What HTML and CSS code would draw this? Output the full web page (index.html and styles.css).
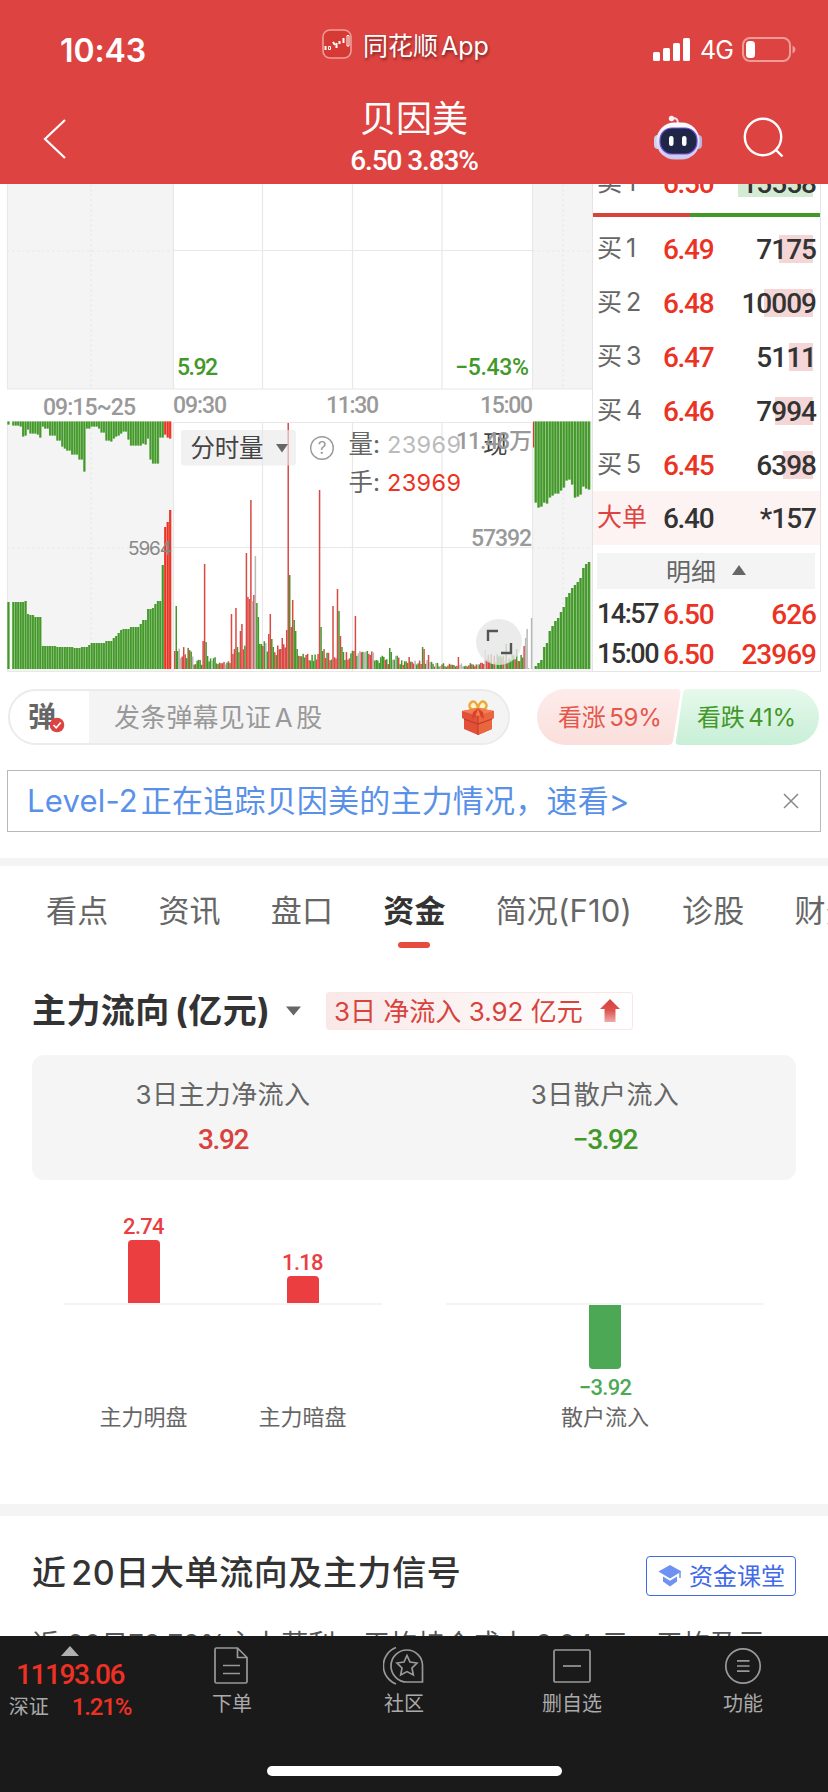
FILE: index.html
```html
<!DOCTYPE html>
<html lang="zh-CN">
<head>
  <meta charset="UTF-8">
  <meta name="viewport" content="width=device-width, initial-scale=1.0">
  <title>贝因美</title>
  <link rel="stylesheet" href="styles.css">
</head>
<body>
<div class="page">

  <header class="header">
    <div class="status">
      <div class="time">10:43</div>
      <div class="from-app">
        <svg width="30" height="30" viewBox="0 0 30 30">
          <rect x="1" y="1" width="28" height="28" rx="7" fill="#d63a34" stroke="#ee9c98" stroke-width="1.6"/>
          <path d="M3.500 17v4M11 13l2 3M14.500 14v5M17.500 12v3M21.500 9v5" stroke="#fff" stroke-width="2"/>
          <path d="M6.500 17.500h2v3h-2zM25 6.500h2v10.500h-2z" fill="none" stroke="#fff"/>
        </svg>
        <span>同花顺 App</span>
      </div>
      <div class="signal">
        <svg width="38" height="24" viewBox="0 0 38 24" fill="#fff">
          <rect x="0" y="14" width="7" height="9" rx="1.500"/>
          <rect x="10" y="10" width="7" height="13" rx="1.500"/>
          <rect x="20" y="5" width="7" height="18" rx="1.500"/>
          <rect x="30" y="0" width="7" height="23" rx="1.500"/>
        </svg>
        <span>4G</span>
        <svg width="54" height="26" viewBox="0 0 54 26">
          <rect x="1" y="1" width="47" height="23" rx="7" fill="none" stroke="#ee9c98" stroke-width="2"/>
          <rect x="4" y="4" width="9" height="17" rx="3.500" fill="#fff"/>
          <path d="M50.500 8.500q3 1.500 3 4t-3 4z" fill="#ee9c98"/>
        </svg>
      </div>
    </div>
    <div class="nav">
      <svg class="back" width="24" height="40" viewBox="0 0 24 40"><path d="M22 1L2 20L22 39" fill="none" stroke="#fff" stroke-width="2.200"/></svg>
      <div class="title">
        <h1>贝因美</h1>
        <div class="din">6.50 3.83%</div>
      </div>
      <div class="tools">
        <svg width="50" height="46" viewBox="0 0 50 46">
          <defs>
            <linearGradient id="shell" x1="0" y1="0" x2="0" y2="1"><stop offset="0" stop-color="#fff"/><stop offset="1" stop-color="#c9c8f0"/></linearGradient>
          </defs>
          <path d="M19 3.500q6-1.500 6 5" fill="none" stroke="#e9e6f7" stroke-width="2"/>
          <circle cx="18.500" cy="3.500" r="2.700" fill="#f3f0fa"/>
          <rect x="1" y="20" width="8" height="14" rx="4" fill="#cfd0ea"/>
          <rect x="41" y="20" width="8" height="14" rx="4" fill="#b9b6e2"/>
          <rect x="3.500" y="7.500" width="43" height="37" rx="18" fill="url(#shell)"/>
          <rect x="7" y="13" width="37" height="26" rx="12" fill="#202746" stroke="#6b52d8" stroke-width="1.200"/>
          <rect x="16" y="21" width="4.500" height="10" rx="2.200" fill="#fff"/>
          <rect x="29" y="21" width="4.500" height="10" rx="2.200" fill="#fff"/>
        </svg>
        <svg width="42" height="42" viewBox="0 0 42 42" fill="none" stroke="#fff" stroke-width="2.400">
          <circle cx="20" cy="20" r="18.200"/><path d="M32.500 32.500L39.500 39.500"/>
        </svg>
      </div>
    </div>
  </header>

  <section class="quote">
    <svg class="chart" width="592" height="488" viewBox="0 184 592 488">
      <rect x="7" y="184" width="166" height="205" fill="#f4f4f4"/>
      <rect x="532" y="184" width="60" height="205" fill="#f4f4f4"/>
      <rect x="7" y="422" width="166" height="250" fill="#f4f4f4"/>
      <rect x="532" y="422" width="60" height="250" fill="#f4f4f4"/>
      <g stroke="#e8e8e8" stroke-width="1.200" fill="none">
        <path d="M7.500 184V389M173.500 184V389M262.500 184V389M352.500 184V389M442 184V389M532.500 184V389"/>
        <path d="M173 250.500H532M7 389H592M173 422.500H592M173 547.500H532M7 671.500H592"/>
        <path d="M7.500 422V672M173.500 422V672M262.500 422V672M352.500 422V672M442 422V672M532.500 422V672"/>
        <path d="M7 251H173M532 251H592M91 184V389M563 184V389M7 548H173M532 548H592M91 422V672M563 422V672" stroke-dasharray="2.500 2.500"/>
      </g>
      <g id="bars"></g>

      <text class="t-din green" x="177" y="375" textLength="41">5.92</text>
      <text class="t-din green" x="455" y="375" textLength="74">−5.43%</text>
      <text class="t-din grey" x="43" y="414.500" textLength="93">09:15~25</text>
      <text class="t-din grey" x="173" y="413" textLength="54">09:30</text>
      <text class="t-din grey" x="326" y="413" textLength="53">11:30</text>
      <text class="t-din grey" x="480" y="413" textLength="53">15:00</text>
      <text class="t-small" x="128" y="554.500" textLength="44">5964</text>

      <rect x="181" y="430" width="115" height="35.500" rx="3" fill="#e9e9e9" fill-opacity=".65"/>
      <text class="t-cn" x="190.500" y="457" textLength="73">分时量</text>
      <path d="M276 444h12l-6 8.500z" fill="#666"/>
      <circle cx="322" cy="448" r="11.300" fill="none" stroke="#999" stroke-width="1.400"/>
      <text class="t-q" x="322" y="454" text-anchor="middle">?</text>
      <text class="t-cn dim" x="348.500" y="453">量:</text>
      <text class="t-num pale" x="387" y="452.500" textLength="74">23969</text>
      <text class="t-cn" x="483" y="453">现</text>
      <text class="t-din grey" x="456" y="448.500" textLength="76">11.48万</text>
      <text class="t-cn dim" x="348.500" y="491">手:</text>
      <text class="t-num red" x="387" y="490.500" textLength="74">23969</text>
      <text class="t-din grey" x="471" y="545.500" textLength="61">57392</text>

      <circle cx="499" cy="642" r="23" fill="#e6e6e6" fill-opacity=".8"/>
      <path d="M488 641V631H498M511 643V653H501" fill="none" stroke="#555" stroke-width="2.400"/>
    </svg>

    <div class="orders">
      <div class="order cut"><span>卖 1</span><b>6.50</b><i><em class="sell" style="width:75px"></em>15558</i></div>
      <div class="ratio"><span></span></div>
      <div class="order"><span>买 1</span><b>6.49</b><i><em style="width:34px"></em>7175</i></div>
      <div class="order"><span>买 2</span><b>6.48</b><i><em style="width:49px"></em>10009</i></div>
      <div class="order"><span>买 3</span><b>6.47</b><i><em style="width:24px"></em>5111</i></div>
      <div class="order"><span>买 4</span><b>6.46</b><i><em style="width:38px"></em>7994</i></div>
      <div class="order"><span>买 5</span><b>6.45</b><i><em style="width:30px"></em>6398</i></div>
      <div class="order big"><span>大单</span><b>6.40</b><i>*157</i></div>
      <div class="detail">明细 <svg width="14" height="10"><path d="M0 10L7 0L14 10z" fill="#666"/></svg></div>
      <div class="deal"><span>14:57</span><b>6.50</b><i>626</i></div>
      <div class="deal"><span>15:00</span><b>6.50</b><i>23969</i></div>
    </div>
  </section>

  <section class="danmu">
    <div class="danmu-input">
      <div class="danmu-switch">弹
        <svg width="16" height="16" viewBox="0 0 16 16"><circle cx="8" cy="8" r="7.300" fill="#dd4340"/><path d="M4.500 8l2.700 2.800L11.800 5.500" fill="none" stroke="#fff" stroke-width="1.700"/></svg>
      </div>
      <span class="danmu-text">发条弹幕见证 A 股</span>
      <svg class="gift" width="34" height="36" viewBox="0 0 34 36">
        <path d="M17 9C10 13 6 7 10 3.500C13 1 16 4 17 9C18 4 21 1 24 3.500C28 7 24 13 17 9z" fill="#fff3c8" stroke="#e9a93c" stroke-width="2.400"/>
        <path d="M1 12L17 9L33 12V19L31 20V30L17 36L3 30V20L1 19z" fill="#e2503a"/>
        <path d="M1 12L17 17L33 12L17 9z" fill="#f47b52"/>
        <path d="M17 17L33 12V19L31 20V30L17 36z" fill="#e9663f"/>
        <path d="M3 20L17 25L31 20" fill="none" stroke="#c23a2a" stroke-width="1.200"/>
        <path d="M17 17V36" stroke="#c93f2c" stroke-width="1.200"/>
        <path d="M17 9.500L12 13l-1 7 3-2 3-8 3 8 3 2-1-7z" fill="#d5432c"/>
      </svg>
    </div>
    <div class="vote">
      <svg width="284" height="56" viewBox="0 0 284 56">
        <defs>
          <linearGradient id="up" x1="0" y1="0" x2="0" y2="1"><stop offset="0" stop-color="#fdeceb"/><stop offset="1" stop-color="#fadfdc"/></linearGradient>
          <linearGradient id="down" x1="0" y1="0" x2="0" y2="1"><stop offset="0" stop-color="#e6f9ec"/><stop offset="1" stop-color="#c8efd6"/></linearGradient>
        </defs>
        <path d="M28 0H139Q144 0 143.500 4L136 52Q135 56 131 56H28A28 28 0 0 1 28 0z" fill="url(#up)"/>
        <path d="M151 0H254A28 28 0 0 1 254 56H143Q138 56 139 52L146 4Q147 0 151 0z" fill="url(#down)"/>
      </svg>
      <span class="vote-up">看涨 59%</span>
      <span class="vote-down">看跌 41%</span>
    </div>
  </section>

  <section class="notice">
    <span>Level-2 正在追踪贝因美的主力情况，速看&gt;</span>
    <svg width="16" height="16" viewBox="0 0 16 16"><path d="M1 1L15 15M15 1L1 15" stroke="#888" stroke-width="1.500"/></svg>
  </section>

  <nav class="tabs">
    <a>看点</a><a>资讯</a><a>盘口</a><a class="active">资金</a><a>简况(F10)</a><a>诊股</a><a>财务</a>
  </nav>

  <section class="flow">
    <div class="flow-head">
      <h2>主力流向 (亿元)</h2>
      <svg width="15" height="10"><path d="M0 .500H15L7.500 9.500z" fill="#666"/></svg>
      <div class="badge"><span>3日 净流入 3.92 亿元</span>
        <svg width="20" height="24" viewBox="0 0 20 24">
          <defs><linearGradient id="arr" x1="0" y1="0" x2="0" y2="1"><stop offset="0" stop-color="#d8403c"/><stop offset=".5" stop-color="#dc5350"/><stop offset="1" stop-color="#eeaaa8"/></linearGradient></defs>
          <path d="M10 0L20 10H15.500V23H4.500V10H0z" fill="url(#arr)"/>
        </svg>
      </div>
    </div>
    <div class="summary">
      <div><p>3日主力净流入</p><strong class="din up">3.92</strong></div>
      <div><p>3日散户流入</p><strong class="din down">−3.92</strong></div>
    </div>
    <div class="columns">
      <div class="group">
        <div class="col">
          <div class="above"><span>2.74</span><div class="bar" style="height:63px"></div></div>
          <div class="below"></div>
          <p>主力明盘</p>
        </div>
        <div class="col">
          <div class="above"><span>1.18</span><div class="bar" style="height:27px"></div></div>
          <div class="below"></div>
          <p>主力暗盘</p>
        </div>
      </div>
      <div class="group">
        <div class="col">
          <div class="above"></div>
          <div class="below"><div class="bar" style="height:64px"></div><span>−3.92</span></div>
          <p>散户流入</p>
        </div>
      </div>
    </div>
  </section>

  <section class="signal-card">
    <div class="signal-head">
      <h2>近 20日大单流向及主力信号</h2>
      <div class="course">
        <svg width="24" height="22" viewBox="0 0 24 22" fill="#6f92f2">
          <path d="M12 0L23.500 6.500L12 13.500L0.500 6.500z"/><path d="M5 11.500L12 15.800L19 11.500V16.500Q15.500 19 12 21.500Q8.500 19 5 16.500z"/><path d="M22 7v6" stroke="#6f92f2" stroke-width="1.500"/>
        </svg>
        <span>资金课堂</span>
      </div>
    </div>
    <p class="signal-text">近 20日73.73%主力获利，平均持仓成本 6.04 元，平均盈亏</p>
  </section>

  <footer class="bottom">
    <div class="index">
      <svg width="18" height="10"><path d="M0 10L9 0L18 10z" fill="#b0b0b0"/></svg>
      <div class="din index-value">11193.06</div>
      <div class="index-row"><span>深证</span><b class="din">1.21%</b></div>
    </div>
    <div class="menu">
      <div class="item">
        <svg width="36" height="40" viewBox="0 0 36 40"><path d="M2.500 2H23.500L33 11.500V35.500Q33 37 31.500 37H2.500Q1 37 1 35.500V3.500Q1 2 2.500 2zM23.500 2V11.500H33M9 19.500H26M9 27.500H26"/></svg>
        <span>下单</span>
      </div>
      <div class="item">
        <svg width="42" height="40" viewBox="0 0 42 40"><path d="M24 4A16 16 0 1 0 24 36H39.500V19.500A15.500 15.500 0 0 0 24 4zM13 1.500A19.500 19.500 0 0 0 13 38"/><path d="M24 9.500L27 16L34 17L29 22L30.300 29L24 25.600L17.700 29L19 22L14 17L21 16z"/></svg>
        <span>社区</span>
      </div>
      <div class="item">
        <svg width="40" height="40" viewBox="0 0 40 40"><rect x="2" y="4" width="36" height="32" rx="1.500"/><path d="M11 20H29"/></svg>
        <span>删自选</span>
      </div>
      <div class="item">
        <svg width="40" height="40" viewBox="0 0 40 40"><circle cx="20" cy="20" r="17.200"/><path d="M14 14.800H26.500M14 20H26.500M14 25.200H26.500"/></svg>
        <span>功能</span>
      </div>
    </div>
    <div class="home"></div>
  </footer>

</div>
<script src="script.js"></script>
</body>
</html>
```

FILE: styles.css
```css
* {
  box-sizing: border-box;
}
body {
  margin: 0;
  background: #fff;
  color: #333;
  font-family: Inter, "Noto Sans CJK SC", sans-serif;
}
h1, h2, p {
  margin: 0;
}
b, i, em {
  font-style: normal;
}
svg {
  display: block;
  flex: none;
}
.page {
  width: 828px;
  height: 1792px;
  overflow: hidden;
  display: flex;
  flex-direction: column;
}
.page > * {
  flex: none;
}
.din {
  font-family: Roboto, sans-serif;
  font-weight: 500;
  letter-spacing: -0.05em;
}

/* header */
.header {
  height: 184px;
  background: #dd4340;
  color: #fff;
}
.status {
  height: 92px;
  display: grid;
  grid-template-columns: 300px 1fr 300px;
  padding-top: 8px;
}
.time {
  padding-left: 60px;
  align-self: center;
  font-size: 32px;
  font-weight: 600;
  letter-spacing: -0.1px;
}
.from-app {
  display: flex;
  align-items: center;
  gap: 11px;
  padding-left: 22px;
  height: 72px;
  font-size: 25px;
  white-space: nowrap;
  word-spacing: -4px;
  text-shadow: 1px 2px 3px rgba(0,0,0,0.45);
}
.signal {
  display: flex;
  align-items: center;
  font-size: 25px;
  padding-left: 125px;
  gap: 9px;
}
.signal span {
  letter-spacing: -1px;
}
.nav {
  height: 92px;
  display: grid;
  grid-template-columns: 300px 228px 300px;
}
.back {
  margin: 27px 0 0 43px;
}
.title {
  text-align: center;
}
.title h1 {
  font-size: 36px;
  line-height: 54px;
  font-weight: 400;
}
.title .din {
  font-size: 28px;
  line-height: 30px;
  letter-spacing: -1.1px;
}
.tools {
  display: flex;
  align-items: center;
  gap: 40px;
  padding: 0 0 0 125px;
}

/* chart and order book */
.quote {
  height: 488px;
  display: grid;
  grid-template-columns: 592px 229px;
  overflow: hidden;
}
.t-din {
  font: 500 23px Roboto, "Noto Sans CJK SC", sans-serif;
}
.t-small {
  font: 19px Inter, sans-serif;
  fill: #888;
}
.t-cn {
  font: 24.500px Inter, "Noto Sans CJK SC", sans-serif;
  fill: #444;
}
.t-q {
  font: 17px Inter, sans-serif;
  fill: #999;
}
.t-num {
  font: 23.500px Inter, sans-serif;
}
.dim { fill: #666; }
.green { fill: #43982a; }
.grey { fill: #999; }
.pale { fill: #bbb; }
.red { fill: #ea3323; }
.orders {
  border: solid #e4e4e4;
  border-width: 0 1px 1px;
  height: 488px;
}
.order, .deal {
  height: 54px;
  display: grid;
  grid-template-columns: 66px 66px 1fr;
  align-items: center;
  padding: 0 4px;
  font-size: 25px;
  color: #666;
  white-space: nowrap;
}
.order span {
  line-height: 36px;
  margin-top: -3px;
  word-spacing: -3px;
}
.order b, .deal b {
  font: 500 28px Roboto, sans-serif;
  letter-spacing: -1.3px;
  color: #ea3323;
}
.order i, .deal i {
  font: 500 28px Roboto, sans-serif;
  letter-spacing: -1px;
  color: #333;
  text-align: right;
}
/* depth bar drawn behind the volume */
.order i {
  position: relative;
  z-index: 0;
}
.order i em {
  position: absolute;
  z-index: -1;
  right: 3px;
  top: 2px;
  height: 28px;
  background: #f5d6d7;
}
.order i em.sell {
  background: #d2ebd2;
}
.order.cut {
  margin-top: -28px;
}
.ratio {
  height: 4px;
  margin: 3px 0 5px;
  background: #43982a;
}
.ratio span {
  display: block;
  width: 97px;
  height: 4px;
  background: #d8433d;
}
.order.big {
  height: 54px;
  margin-top: -1px;
  background: #fdf3f3;
  color: #dd4340;
}
.order.big b {
  color: #333;
}
.detail {
  height: 36px;
  margin: 8px 5px 5px 4px;
  padding-bottom: 2px;
  background: #f4f4f4;
  display: flex;
  align-items: center;
  justify-content: center;
  gap: 16px;
  font-size: 25px;
  color: #666;
}
.deal {
  height: 40px;
}
.deal span {
  font: 500 27px Roboto, sans-serif;
  letter-spacing: -1.5px;
  color: #333;
}
.deal i {
  color: #ea3323;
}

/* bullet comments */
.danmu {
  height: 98px;
  padding: 17px 8px 0;
  display: flex;
  justify-content: space-between;
}
.danmu-input {
  width: 502px;
  height: 56px;
  border: 2px solid #ebebeb;
  border-radius: 28px;
  background: #f4f4f4;
  display: flex;
  align-items: center;
  overflow: hidden;
}
.danmu-switch {
  width: 79px;
  height: 52px;
  background: #fff;
  display: flex;
  align-items: center;
  padding: 0 0 4px 18px;
  font-size: 28px;
  font-weight: 700;
  color: #666;
}
.danmu-switch svg {
  margin: 20px 0 0 -7px;
}
.danmu-text {
  flex: 1;
  padding: 0 0 4px 25px;
  font-size: 26px;
  letter-spacing: 0.2px;
  color: #999;
  word-spacing: -4px;
}
.gift {
  margin-right: 13px;
}
.vote {
  display: grid;
  grid-template-columns: 142px 142px;
  width: 284px;
  height: 56px;
  align-items: center;
  font-size: 24px;
  letter-spacing: -0.2px;
  word-spacing: -3px;
  margin-right: -1px;
}
.vote svg {
  grid-area: 1 / 1 / 2 / 3;
}
.vote span {
  margin-top: -3px;
}
.vote-up {
  grid-area: 1 / 1;
  padding-left: 21px;
  color: #e4574b;
}
.vote-down {
  grid-area: 1 / 2;
  padding-left: 18px;
  color: #43982a;
}

.notice {
  height: 62px;
  margin: 0 7px 26px;
  border: 1px solid #b8b8b8;
  display: flex;
  align-items: center;
  justify-content: space-between;
  padding: 0 21px 0 19px;
  font-size: 31px;
  letter-spacing: 0.2px;
  word-spacing: -6px;
  color: #5a91e8;
  white-space: nowrap;
}
.notice span {
  margin-top: -6px;
}

/* tabs */
.tabs {
  height: 110px;
  border-top: 8px solid #f4f4f4;
  padding: 22px 0 0 46px;
  display: flex;
  gap: 50px;
  font-size: 31px;
  letter-spacing: 0.2px;
  line-height: 46px;
  color: #666;
  white-space: nowrap;
}
.tabs a.active {
  color: #333;
  font-weight: 700;
}
.tabs a.active::after {
  content: "";
  display: block;
  width: 32px;
  height: 6px;
  border-radius: 3px;
  margin: 8px auto 0;
  background: #e64b3e;
}

/* money flow */
.flow {
  height: 536px;
  padding: 18px 32px 0;
}
.flow-head {
  height: 50px;
  display: flex;
  align-items: center;
}
.flow-head h2 {
  width: 254px;
  margin-top: -6px;
  font-size: 34px;
  font-weight: 700;
  letter-spacing: 0.4px;
  word-spacing: -3px;
  white-space: nowrap;
}
.badge {
  width: 307px;
  height: 38px;
  margin-left: 25px;
  padding: 0 12px 0 7px;
  border: 1px solid #fbe6e6;
  border-radius: 3px;
  background: linear-gradient(90deg, #f9e8e8, #fff);
  display: flex;
  align-items: center;
  justify-content: space-between;
  font-size: 26px;
  color: #d8433d;
  white-space: nowrap;
}
.badge span {
  margin-top: -4px;
}
.summary {
  height: 125px;
  margin-top: 19px;
  border-radius: 12px;
  background: #f5f5f5;
  display: grid;
  grid-template-columns: 1fr 1fr;
  text-align: center;
  padding-top: 20px;
}
.summary p {
  font-size: 26px;
  line-height: 40px;
  letter-spacing: 0.4px;
  color: #666;
}
.summary strong {
  display: block;
  font-size: 28px;
  line-height: 50px;
}
.up { color: #d8433d; }
.down { color: #43982a; }
.columns {
  display: grid;
  grid-template-columns: 318px 318px;
  gap: 64px;
  margin: 25px 32px 0;
}
.group {
  display: grid;
  grid-auto-flow: column;
  grid-auto-columns: 1fr;
}
.col {
  display: flex;
  flex-direction: column;
  align-items: center;
}
.above, .below {
  width: 100%;
  height: 100px;
  display: flex;
  flex-direction: column;
  align-items: center;
}
.above {
  justify-content: flex-end;
  border-bottom: 2px solid #f4f4f4;
}
.col span {
  font: 500 22px Roboto, sans-serif;
  letter-spacing: -0.7px;
  line-height: 26px;
  color: #ea3e41;
}
.below span {
  color: #4ca855;
  margin-top: 6px;
}
.bar {
  width: 32px;
  background: #ea3e41;
  border-radius: 4px 4px 0 0;
}
.below .bar {
  background: #4ca855;
  border-radius: 0 0 4px 4px;
}
.col p {
  margin-top: -3px;
  font-size: 22px;
  line-height: 30px;
  color: #666;
}

/* signal card */
.signal-card {
  height: 132px;
  border-top: 12px solid #f4f4f4;
  padding: 36px 32px 0;
  overflow: hidden;
}
.signal-head {
  display: flex;
  align-items: center;
  justify-content: space-between;
  height: 48px;
}
.signal-head h2 {
  margin-top: -11px;
  font-size: 34px;
  font-weight: 500;
  letter-spacing: 0.6px;
  word-spacing: -5px;
}
.course {
  width: 150px;
  height: 40px;
  border: 1.500px solid #3f6ae0;
  border-radius: 4px;
  display: flex;
  align-items: center;
  gap: 7px;
  padding-left: 11px;
  font-size: 24px;
  color: #4169e8;
}
.course span {
  margin-top: -4px;
}
.signal-text {
  margin-top: 25px;
  font-size: 27px;
  letter-spacing: 0.3px;
  line-height: 40px;
  color: #555;
  white-space: nowrap;
}

/* bottom bar */
.bottom {
  height: 156px;
  background: #1a1a1a;
  color: #aaa;
  display: grid;
  grid-template: 120px 36px / 140px 688px;
}
.index {
  display: flex;
  flex-direction: column;
  align-items: center;
  padding-top: 10px;
}
.index-value {
  font-size: 28px;
  line-height: 38px;
  color: #ef3124;
}
.index-row {
  display: flex;
  gap: 23px;
  font-size: 20px;
  line-height: 27px;
}
.index-row b {
  font-size: 24px;
  color: #ef3124;
}
.menu {
  display: grid;
  grid-template-columns: 184px 160px 176px 166px;
}
.item {
  display: flex;
  flex-direction: column;
  align-items: center;
  padding-top: 10px;
  font-size: 20px;
  line-height: 36px;
}
.item svg {
  fill: none;
  stroke: #999;
  stroke-width: 1.700;
}
.home {
  grid-column: 1 / 3;
  width: 295px;
  height: 10px;
  margin: 10px auto 0;
  border-radius: 5px;
  background: #fff;
}
```

FILE: script.js
```javascript
const svgNS = "http://www.w3.org/2000/svg";
const layer = document.getElementById("bars");
const GREEN = "#43982a", RED = "#ea3323", DAY_RED = "#d94a44", GREY = "#b8b8b8";

function bar(x, y, w, h, color) {
  const r = document.createElementNS(svgNS, "rect");
  r.setAttribute("x", x);
  r.setAttribute("y", y);
  r.setAttribute("width", w);
  r.setAttribute("height", h);
  r.setAttribute("fill", color);
  layer.appendChild(r);
}

// pale body with a darker core, like the call auction bars
function auction(x0, step, data, top, redFrom) {
  data.forEach((h, i) => {
    if (!h) return;
    const x = x0 + i * step;
    const red = i >= redFrom;
    const y = top ? 421.5 : 669 - h;
    bar(x, y, step, h, red ? "#f0766c" : "#86bd75");
    bar(x + step * 0.1, y, step * 0.68, h, red ? RED : GREEN);
  });
}

const preTop = [3,0,4,4,4,5,15,14,8,12,12,12,13,16,5,7,7,14,14,14,19,19,25,27,29,29,33,33,33,38,38,50,7,7,5,5,5,7,11,11,19,19,20,17,15,14,12,10,10,18,24,24,24,24,24,22,23,17,38,42,42,42,16,16,13,16,17];
const preBottom = [67,0,67,67,67,67,67,68,55,54,54,52,52,52,23,23,23,23,23,23,22,22,22,22,22,22,22,21,21,21,22,22,22,24,26,26,26,26,26,26,28,28,28,31,33,36,39,40,40,40,42,42,42,42,45,49,49,60,60,61,65,68,68,104,142,147,159];
const postTop = [81,86,85,81,82,76,74,72,72,69,66,59,58,63,76,75,73,65,67,68];
const postBottom = [3,6,9,22,26,38,43,48,51,57,62,72,76,81,84,87,91,101,105,107];

auction(7.3, 2.45, preTop, true, 64);
auction(7.3, 2.45, preBottom, false, 64);
bar(533, 421.5, 1.2, 26, RED);
auction(534.5, 2.8, postTop, true, 99);
auction(534.5, 2.8, postBottom, false, 99);

// minute volume: [from, to, low, high]
const levels = [[0,12,10,22],[13,18,4,10],[19,27,6,14],[28,37,4,8],[38,47,12,25],[48,60,24,28],[61,74,12,26],[75,96,8,16],[97,120,8,20],[121,136,8,18],[137,150,4,14],[151,172,4,9],[173,204,2,6],[205,239,5,15]];
const peaks = {
  0:[18,"r"],1:[63,"g"],19:[28,"r"],20:[105,"r"],21:[27,"g"],38:[55,"r"],41:[61,"r"],44:[38,"r"],45:[45,"r"],
  48:[116,"r"],49:[72,"r"],50:[70,"r"],51:[169,"r"],52:[68,"e"],53:[74,"r"],54:[113,"e"],55:[66,"g"],56:[52,"g"],
  57:[25,"g"],58:[25,"g"],59:[23,"r"],61:[26,"e"],63:[35,"r"],64:[55,"r"],65:[30,"g"],66:[22,"g"],71:[20,"r"],
  72:[31,"r"],75:[39,"r"],76:[246,"r"],77:[94,"g"],78:[42,"r"],79:[69,"r"],80:[49,"g"],81:[38,"g"],82:[20,"g"],
  96:[15,"r"],97:[179,"r"],98:[42,"g"],99:[18,"g"],106:[63,"r"],109:[80,"r"],110:[58,"g"],111:[33,"r"],112:[22,"g"],
  120:[18,"r"],121:[53,"r"],124:[18,"e"],129:[18,"g"],144:[21,"g"],145:[17,"g"],157:[12,"r"],166:[22,"g"],167:[20,"r"],
  170:[14,"r"],190:[12,"r"],208:[19,"e"],222:[25,"g"],229:[20,"g"],234:[23,"r"],235:[31,"e"],236:[40,"e"],
  237:[1,"e"],238:[0,"e"],239:[51,"e"]
};
const colors = { r: DAY_RED, g: GREEN, e: GREY };
let seed = 7;
function next() {
  seed = (seed * 1103515245 + 12345) % 2147483648;
  return seed / 2147483648;
}
for (let i = 0; i < 240; i++) {
  const [, , low, high] = levels.find(l => i >= l[0] && i <= l[1]);
  const h = low + next() * (high - low);
  const c = "rrggge"[Math.floor(next() * 6)];
  const [ph, pc] = peaks[i] || [h, c];
  bar(174 + i * 1.493, 669 - ph, 1.5, ph, colors[pc]);
}
```
